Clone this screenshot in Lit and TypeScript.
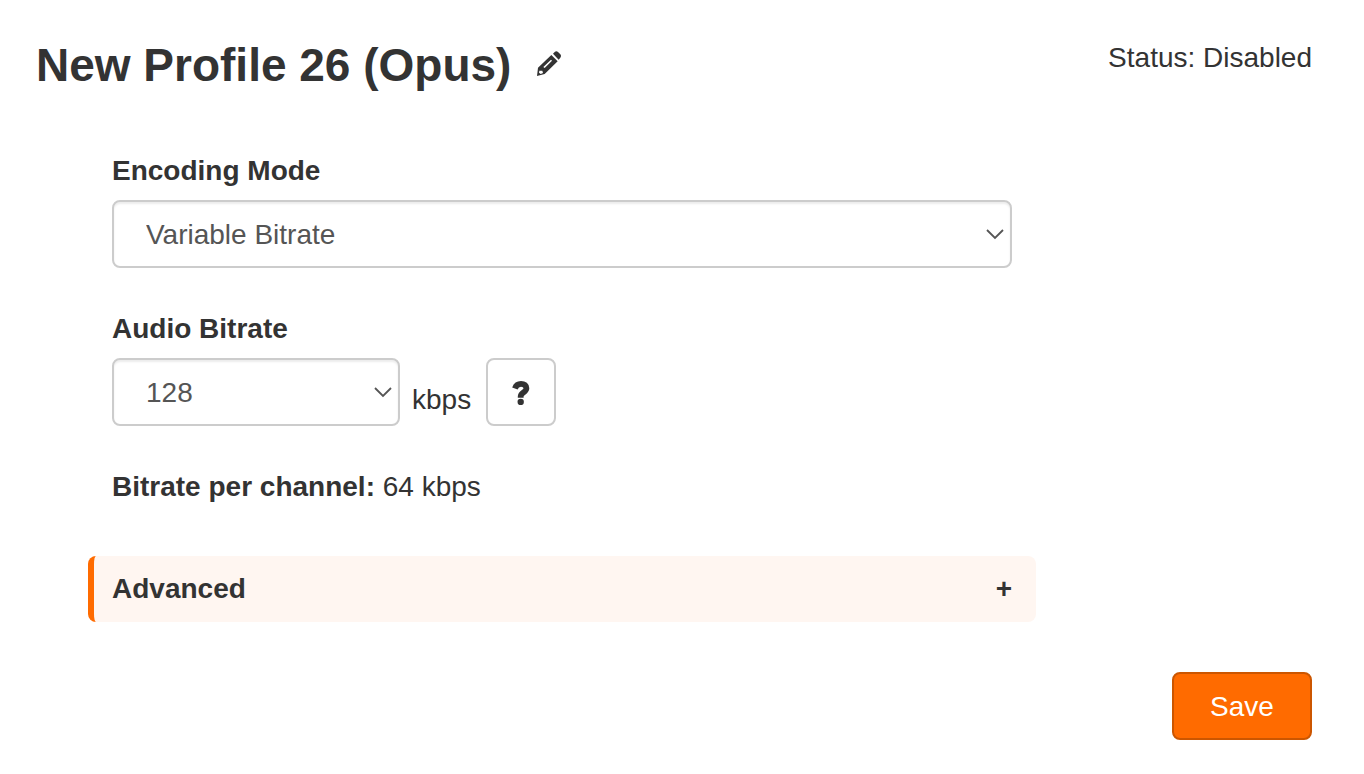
import { LitElement, html, css } from "lit";
import { customElement, property, state } from "lit/decorators.js";

@customElement("select-field")
class SelectField extends LitElement {
  @property() label = "";
  @property({ type: Array }) options: string[] = [];
  @property() value = "";

  static styles = css`
    :host {
      display: block;
    }
    .label {
      display: block;
      margin-bottom: 8px;
      font-weight: 700;
      line-height: 42px;
    }
    .row {
      display: flex;
      gap: 12px;
    }
    .box {
      display: grid;
      flex: 1;
      align-items: center;
    }
    .select {
      grid-area: 1 / 1;
      appearance: none;
      box-sizing: border-box;
      width: 100%;
      height: 68px;
      margin: 0;
      padding: 2px 48px 0 32px;
      border: 2px solid #ccc;
      border-radius: 8px;
      background: #fff;
      box-shadow: inset 0 2px 2px rgba(0, 0, 0, 0.075);
      color: #555;
      font: inherit;
    }
    .chevron {
      grid-area: 1 / 1;
      justify-self: end;
      width: 18px;
      height: 12px;
      margin-right: 8px;
      pointer-events: none;
    }
  `;

  render() {
    return html`
      <label class="label" for="select">${this.label}</label>
      <div class="row">
        <div class="box">
          <select class="select" id="select">
            ${this.options.map(
              (o) => html`<option ?selected=${o === this.value}>${o}</option>`
            )}
          </select>
          <svg class="chevron" viewBox="0 0 18 12" aria-hidden="true">
            <path d="M1 2l8 8 8-8" fill="none" stroke="#555" stroke-width="1.8" />
          </svg>
        </div>
        <slot></slot>
      </div>
    `;
  }
}

@customElement("app-root")
class AppRoot extends LitElement {
  @state() private open = false;

  static styles = css`
    :host {
      display: block;
      padding: 38px 52px 34px 36px;
      background: #fff;
      color: #333;
      font: 28px/40px "Liberation Sans", Arial, sans-serif;
    }
    .header {
      display: flex;
      justify-content: space-between;
      align-items: flex-start;
      margin-bottom: 58px;
    }
    .heading {
      display: flex;
      align-items: center;
      gap: 26px;
    }
    .title {
      margin: 0;
      font-size: 46px;
      font-weight: 700;
      line-height: 54px;
    }
    .edit {
      display: flex;
      padding: 0;
      border: 0;
      background: none;
      color: inherit;
      cursor: pointer;
    }
    .pencil {
      width: 24px;
      height: 28px;
    }
    .form {
      display: flex;
      flex-direction: column;
      gap: 40px;
      max-width: 900px;
      margin-left: 76px;
    }
    .short {
      width: 444px;
    }
    .unit {
      min-width: 62px;
      padding-top: 22px;
    }
    .help {
      display: grid;
      place-items: center;
      box-sizing: border-box;
      width: 70px;
      height: 68px;
      padding: 0;
      border: 2px solid #ccc;
      border-radius: 8px;
      background: #fff;
      color: inherit;
      cursor: pointer;
    }
    .question {
      width: 18px;
      height: 26px;
    }
    .summary {
      margin: 0;
      line-height: 42px;
    }
    .advanced {
      display: flex;
      justify-content: space-between;
      align-items: center;
      height: 66px;
      margin: 8px -24px 0;
      padding: 0 24px 0 18px;
      border: 0;
      border-left: 6px solid #ff6b00;
      border-radius: 8px;
      background: #fff6f1;
      color: inherit;
      font: inherit;
      font-weight: 700;
      cursor: pointer;
    }
    .footer {
      display: flex;
      justify-content: flex-end;
      margin-top: 50px;
    }
    .save {
      box-sizing: border-box;
      height: 68px;
      min-width: 140px;
      padding: 2px 32px 0;
      border: 2px solid #cc5600;
      border-radius: 8px;
      background: #ff6b00;
      color: #fff;
      font: inherit;
      cursor: pointer;
    }
  `;

  render() {
    return html`
      <header class="header">
        <div class="heading">
          <h1 class="title">New Profile 26 (Opus)</h1>
          <button class="edit" aria-label="Rename profile">
            <svg class="pencil" viewBox="0 0 72 84" fill="currentColor" aria-hidden="true">
              <path d="M48 8l5-5q5-4 10 0l7 7q4 5 0 10l-5 6z" />
              <path
                fill-rule="evenodd"
                d="M0 75L3 50 43 12 62 31 23 69zM7 59L6 65 11 69 18 66 16 59zM19 48L23 51 45 29 42 26z"
              />
            </svg>
          </button>
        </div>
        <div>Status: Disabled</div>
      </header>

      <main class="form">
        <select-field
          label="Encoding Mode"
          value="Variable Bitrate"
          .options=${["Variable Bitrate", "Constant Bitrate"]}
        ></select-field>

        <select-field
          class="short"
          label="Audio Bitrate"
          value="128"
          .options=${["64", "96", "128", "192", "256"]}
        >
          <span class="unit">kbps</span>
          <button class="help" aria-label="Help on audio bitrate">
            <svg class="question" viewBox="0 -2 18 26" aria-hidden="true">
              <path
                d="M2.9 7.4C4 4.4 6.2 2.9 9 2.9c3.4 0 5.4 1.7 5.4 4.4 0 4-5.7 4-5.7 8.1v1.3"
                fill="none"
                stroke="currentColor"
                stroke-width="5.8"
              />
              <circle cx="8.7" cy="21" r="3.2" fill="currentColor" />
            </svg>
          </button>
        </select-field>

        <p class="summary"><strong>Bitrate per channel:</strong> 64 kbps</p>

        <button
          class="advanced"
          aria-expanded=${this.open ? "true" : "false"}
          @click=${() => (this.open = !this.open)}
        >
          <span>Advanced</span>
          <span>${this.open ? "−" : "+"}</span>
        </button>
      </main>

      <footer class="footer">
        <button class="save">Save</button>
      </footer>
    `;
  }
}
